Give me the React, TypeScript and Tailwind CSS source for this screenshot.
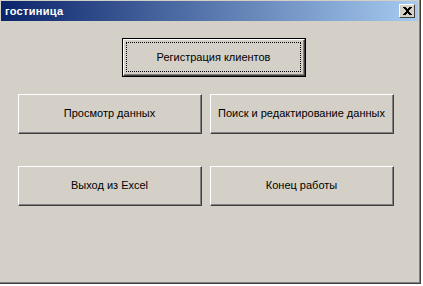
const font = { fontFamily: '"Liberation Sans", "DejaVu Sans", sans-serif' };

const ClassicButton = ({ label, width, height }: { label: string; width: string; height: string }) => (
  <button
    className={`${width} ${height} bg-[#d4d0c8] border border-t-white border-l-white border-r-[#404040] border-b-[#404040] text-[11px] text-black flex items-center justify-center p-0`}
  >
    <span className="flex-1 self-stretch flex items-center justify-center border-r border-b border-[#808080] border-t-transparent border-l-transparent">
      {label}
    </span>
  </button>
);

const DefaultButton = ({ label }: { label: string }) => (
  <button className="w-[184px] h-[39px] border border-black bg-[#d4d0c8] p-0 flex">
    <span className="flex-1 flex border border-t-white border-l-white border-r-[#404040] border-b-[#404040]">
      <span className="flex-1 flex p-[2px] border-r border-b border-[#808080] border-t-transparent border-l-transparent">
        <span className="flex-1 flex items-center justify-center border border-dotted border-black text-[11px] text-black">
          {label}
        </span>
      </span>
    </span>
  </button>
);

export default function App() {
  return (
    <div className="w-[423px] h-[286px] bg-white overflow-hidden" style={font}>
      <div className="w-[421px] h-[284px] border-r border-b border-[#404040]">
        <div className="w-full h-full bg-[#d4d0c8] border-r border-b border-[#808080] pt-[1px] pl-[1px] pr-[1px] flex flex-col">
          <div className="h-[20px] bg-[linear-gradient(90deg,#0a246a,#a6caf0)] flex items-center justify-between pl-[4px] pr-[3px]">
            <span className="text-white font-bold text-[11px] leading-none tracking-[0.3px]">гостиница</span>
            <div className="w-[16px] h-[14px] bg-[#d4d0c8] border border-t-white border-l-white border-r-[#404040] border-b-[#404040] flex items-center justify-center">
              <svg width="9" height="8" viewBox="0 0 9 8" shapeRendering="crispEdges">
                <path d="M0 0h3v1h1v1h1V1h1V0h3v1H8v1H7v1H6v2h1v1h1v1h1v1H6V7H5V6H4v1H3v1H0V7h1V6h1V5h1V3H2V2H1V1H0z" fill="#000" />
              </svg>
            </div>
          </div>
          <div className="flex-1 flex flex-col">
            <div className="mt-[17px] ml-[121px]">
              <DefaultButton label="Регистрация клиентов" />
            </div>
            <div className="mt-[17px] ml-[17px] flex gap-[8px]">
              <ClassicButton label="Просмотр данных" width="w-[184px]" height="h-[40px]" />
              <ClassicButton label="Поиск и редактирование данных" width="w-[184px]" height="h-[40px]" />
            </div>
            <div className="mt-[32px] ml-[17px] flex gap-[8px]">
              <ClassicButton label="Выход из Excel" width="w-[184px]" height="h-[40px]" />
              <ClassicButton label="Конец работы" width="w-[184px]" height="h-[40px]" />
            </div>
          </div>
        </div>
      </div>
    </div>
  );
}
